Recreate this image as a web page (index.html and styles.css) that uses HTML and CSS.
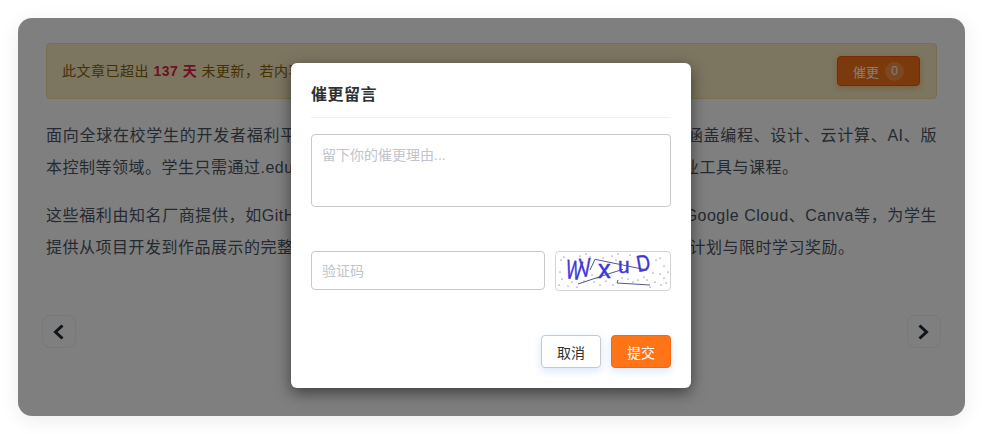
FILE: index.html
```html
<!DOCTYPE html>
<html lang="zh-CN">
<head>
<meta charset="utf-8">
<title>催更留言</title>
<link rel="stylesheet" href="styles.css">
</head>
<body>
<main class="card">
  <section class="notice">
    <p class="notice-text">此文章已超出 <strong class="days">137 天</strong> 未更新，若内容有误或已过时，欢迎留言催更。</p>
    <button class="urge" type="button">催更<span class="urge-count">0</span></button>
  </section>
  <article class="article">
    <p>面向全球在校学生的开发者福利平台，汇集了大量面向学生 免费开放的优质资源，内容涵盖编程、设计、云计算、AI、版本控制等领域。学生只需通过.edu 邮箱或学生证 完成身份验证，即可免费领取到多种专业工具与课程。</p>
    <p>这些福利由知名厂商提供，如GitHub、JetBrains、Microsoft、Notion、Vercel、npm、Google Cloud、Canva等，为学生提供从项目开发到作品展示的完整工具链，部分福利还包含云服务额度、求职支持、认证计划与限时学习奖励。</p>
  </article>
  <nav class="pager">
    <a class="pager-btn" href="#" aria-label="上一篇"><svg class="chev" viewBox="0 0 14 18"><path d="M10.5 2.5 3.5 9l7 6.5"/></svg></a>
    <a class="pager-btn" href="#" aria-label="下一篇"><svg class="chev" viewBox="0 0 14 18"><path d="m2.5 2.5 7 6.5-7 6.5"/></svg></a>
  </nav>
  <div class="overlay">
    <form class="modal">
      <h2 class="modal-title">催更留言</h2>
      <textarea class="reason" placeholder="留下你的催更理由..."></textarea>
      <div class="captcha-row">
        <input class="code" type="text" placeholder="验证码">
        <div class="captcha">
          <svg viewBox="0 0 114 38" class="captcha-svg">
            <g class="noise">
              <circle cx="5" cy="8" r=".5"/><circle cx="8" cy="5" r=".5"/><circle cx="4" cy="20" r=".5"/><circle cx="6" cy="27" r=".5"/><circle cx="3" cy="33" r=".5"/><circle cx="12" cy="34" r=".5"/><circle cx="16" cy="30" r=".5"/><circle cx="21" cy="35" r=".5"/><circle cx="24" cy="4" r=".5"/><circle cx="30" cy="2" r=".5"/><circle cx="34" cy="5" r=".5"/><circle cx="28" cy="29" r=".5"/><circle cx="38" cy="30" r=".5"/><circle cx="41" cy="26" r=".5"/><circle cx="44" cy="33" r=".5"/><circle cx="50" cy="29" r=".5"/><circle cx="47" cy="6" r=".5"/><circle cx="56" cy="4" r=".5"/><circle cx="60" cy="8" r=".5"/><circle cx="62" cy="2" r=".5"/><circle cx="57" cy="33" r=".5"/><circle cx="66" cy="26" r=".5"/><circle cx="72" cy="27" r=".5"/><circle cx="77" cy="30" r=".5"/><circle cx="74" cy="3" r=".5"/><circle cx="82" cy="28" r=".5"/><circle cx="88" cy="25" r=".5"/><circle cx="91" cy="28" r=".5"/><circle cx="97" cy="21" r=".5"/><circle cx="100" cy="8" r=".5"/><circle cx="104" cy="6" r=".5"/><circle cx="108" cy="14" r=".5"/><circle cx="99" cy="30" r=".5"/><circle cx="104" cy="22" r=".5"/><circle cx="108" cy="26" r=".5"/><circle cx="105" cy="33" r=".5"/><circle cx="94" cy="35" r=".5"/><circle cx="110" cy="31" r=".5"/><circle cx="112" cy="20" r=".5"/><circle cx="36" cy="23" r=".5"/>
            </g>
            <g class="scratch">
              <path d="M22 32 49 23 67 17.3"/><path d="M34 18 39 7.3 91 18"/><path d="M62 28 61 31 94 33"/>
            </g>
            <g class="letters">
              <text transform="translate(9 26) rotate(8) scale(.76 1.22)">W</text>
              <text transform="translate(24 25) rotate(-4) scale(.8 1.2)">V</text>
              <text transform="translate(42 26) scale(1.15 1.2)">x</text>
              <text transform="translate(62 21) scale(.95 1)">u</text>
              <text transform="translate(82 20) rotate(-10) scale(.85 1.05)">D</text>
            </g>
          </svg>
        </div>
      </div>
      <div class="actions">
        <button class="btn btn-cancel" type="button">取消</button>
        <button class="btn btn-submit" type="button">提交</button>
      </div>
    </form>
  </div>
</main>
</body>
</html>
```
FILE: styles.css
```css
* { box-sizing: border-box; }
html, body { margin: 0; height: 100%; }
body {
  background: #fff;
  padding: 18px;
  font-family: "Liberation Sans", "Noto Sans CJK SC", sans-serif;
  letter-spacing: .5px;
  overflow: hidden;
}
.card {
  position: relative;
  height: 398px;
  padding: 25px 28px;
  background: #fff;
  border-radius: 14px;
  box-shadow: 0 4px 20px rgba(0, 0, 0, .08);
}
.notice {
  display: flex;
  align-items: center;
  justify-content: space-between;
  height: 56px;
  padding: 0 16px 0 15px;
  background: #f8ebc0;
  border: 1px solid #f2dc9a;
  border-radius: 4px;
}
.notice-text {
  flex: 1;
  min-width: 0;
  margin: 0 0 2px;
  font-size: 14px;
  color: #856404;
  white-space: nowrap;
}
.days { color: #e11d48; font-weight: 700; }
.urge {
  display: flex;
  flex: none;
  align-items: center;
  justify-content: center;
  gap: 6px;
  width: 83px;
  height: 30px;
  padding: 0;
  font: inherit;
  font-size: 13px;
  color: #fff;
  background: #f97316;
  border: 1px solid #ea580c;
  border-radius: 4px;
  box-shadow: 0 2px 6px rgba(249, 115, 22, .4);
}
.urge-count {
  display: flex;
  align-items: center;
  justify-content: center;
  width: 19px;
  height: 19px;
  font-size: 12px;
  background: rgba(255, 255, 255, .2);
  border-radius: 50%;
}
.article { margin-top: 21px; font-size: 16px; line-height: 32px; color: #4b5563; }
.article p { margin: 0 0 16px; text-align: justify; }
.pager { display: flex; justify-content: space-between; margin: 51px -4px 0; }
.pager-btn {
  display: flex;
  align-items: center;
  justify-content: center;
  width: 34px;
  height: 33px;
  border: 1px solid #f0f0f0;
  border-radius: 8px;
}
.chev { width: 14px; height: 18px; }
.chev path { fill: none; stroke: #1f2937; stroke-width: 3; }
.overlay {
  position: absolute;
  inset: 0;
  display: flex;
  justify-content: center;
  padding: 45px 1px 0 0;
  background: rgba(0, 0, 0, .5);
  border-radius: 14px;
}
.modal {
  display: flex;
  flex-direction: column;
  width: 400px;
  height: 325px;
  padding: 20px;
  background: #fff;
  border-radius: 6px;
  box-shadow: 0 5px 15px rgba(0, 0, 0, .5);
}
.modal-title {
  margin: 0 0 16px;
  padding: 1px 0 11px;
  font-size: 16px;
  line-height: 22px;
  font-weight: 700;
  color: #303133;
  border-bottom: 1px solid #f0f0f0;
}
.reason {
  display: block;
  width: 100%;
  height: 73px;
  padding: 10px;
  font: inherit;
  font-size: 14px;
  line-height: 21px;
  border: 1px solid #c8c9cc;
  border-radius: 4px;
  resize: none;
  outline: none;
}
.reason::placeholder, .code::placeholder { color: #c0c4cc; opacity: 1; }
.captcha-row { display: flex; align-items: flex-start; gap: 10px; margin-top: 44px; }
.code {
  flex: 1;
  min-width: 0;
  height: 39px;
  padding: 0 10px;
  font: inherit;
  font-size: 14px;
  border: 1px solid #c8c9cc;
  border-radius: 4px;
  outline: none;
}
.captcha {
  width: 116px;
  height: 40px;
  border: 1px solid #d4d4d8;
  border-radius: 4px;
}
.captcha-svg { display: block; width: 100%; height: 100%; }
.noise circle { fill: #22224a; }
.scratch path { fill: none; stroke: #55558f; stroke-width: 1; }
.letters text { font-family: "Liberation Sans", sans-serif; font-size: 22px; fill: #3f35d8; stroke: #3f35d8; stroke-width: .4; }
.actions { display: flex; justify-content: flex-end; gap: 10px; margin-top: auto; }
.btn {
  width: 60px;
  height: 33px;
  padding: 0;
  font: inherit;
  font-size: 14px;
  border-radius: 4px;
  box-shadow: 0 3px 8px rgba(59, 130, 246, .2);
}
.btn-cancel { color: #303133; background: #fff; border: 1px solid #c8c9cc; }
.btn-submit { color: #fff; background: #ff7416; border: 1px solid #ee6a10; }
```
